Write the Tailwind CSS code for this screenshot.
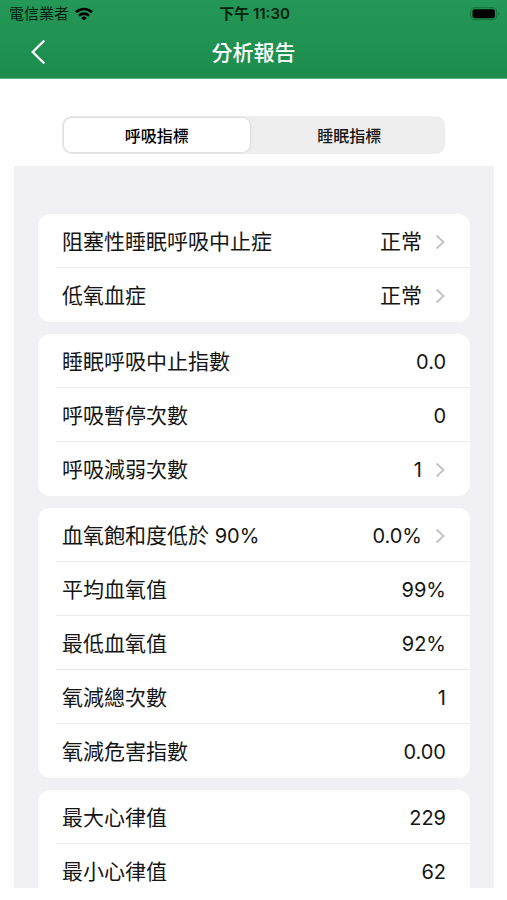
<!DOCTYPE html>
<html lang="zh-Hant">
<head>
<meta charset="utf-8">
<meta name="viewport" content="width=device-width, initial-scale=1">
<title>分析報告</title>
<script src="https://cdn.jsdelivr.net/npm/@tailwindcss/browser@4"></script>
</head>
<body class="flex h-screen flex-col overflow-hidden bg-white pb-3 font-['Inter','Noto_Sans_CJK_TC',sans-serif] text-[#151515]">
  <header class="shrink-0 border-b border-[#5cb27f] bg-linear-to-b from-[#249857] to-[#1c8c4d]">
    <div class="grid h-7 grid-cols-[1fr_auto_1fr] items-center pr-[7px] pl-[9px] text-[15px] text-[#04200f]">
      <div class="flex items-center gap-1.5">
        <span>電信業者</span>
        <svg class="h-[14px] w-[18px]" viewBox="0 0 18 14" fill="none" stroke="#000" stroke-width="2.6" aria-hidden="true">
          <path d="M1 5.2a11.6 11.6 0 0 1 16 0"/>
          <path d="M4 8.6a7.3 7.3 0 0 1 10 0"/>
          <path d="M9 13.6 6.2 10.9a4 4 0 0 1 5.600 0z" fill="#000" stroke="none"/>
        </svg>
      </div>
      <time class="font-semibold">下午 11:30</time>
      <svg class="h-[14px] w-[30px] justify-self-end" viewBox="0 0 30 14" aria-hidden="true">
        <rect x=".7" y=".7" width="26" height="12" rx="4" fill="none" stroke="#147a40" stroke-width="1.300"/>
        <rect x="2.500" y="2.200" width="22.500" height="9" rx="2.200" fill="#000"/>
        <path d="M28 4.700a2.300 2.300 0 0 1 0 4z" fill="#147a40"/>
      </svg>
    </div>
    <div class="grid h-[50px] grid-cols-[1fr_auto_1fr] items-center text-white">
      <button type="button" aria-label="返回" class="ml-[30px] w-4 pb-0.5">
        <svg class="h-[26px] w-4" viewBox="0 0 16 26" fill="none" stroke="currentColor" stroke-width="2.300" aria-hidden="true"><path d="M14.300 1.500 2.700 13l11.600 11.500"/></svg>
      </button>
      <h1 class="text-[21px] leading-6 font-medium">分析報告</h1>
    </div>
  </header>

  <div class="mx-[62px] mt-[37px] mb-3 grid h-[38px] shrink-0 grid-cols-[49fr_51fr] rounded-[9px] bg-[#eeeeee] p-0.5 text-base font-medium" role="tablist">
    <button type="button" role="tab" aria-selected="true" class="rounded-lg bg-white pt-0.5 text-black shadow-[0_0_2px_1px_rgba(0,0,0,0.08)]">呼吸指標</button>
    <button type="button" role="tab" aria-selected="false" class="pt-0.5 pl-1.5">睡眠指標</button>
  </div>

  <main class="mr-[13px] ml-3.5 flex min-h-0 flex-1 flex-col gap-3 overflow-hidden bg-[#f0f0f5] px-6 pt-12 text-[21px] leading-8">
    <ul class="shrink-0 divide-y divide-[#ededed] rounded-xl bg-white pl-[18px]">
      <li class="h-[54px]"><a href="#osa" class="flex h-full items-center pt-0.5 pr-6 pl-1.5"><span>阻塞性睡眠呼吸中止症</span><span class="ml-auto">正常</span><svg class="ml-3 h-4 w-3" viewBox="0 0 12 16" fill="none" stroke="#c4c4c6" stroke-width="2" aria-hidden="true"><path d="M2.500 1.500 9.500 8l-7 6.500"/></svg></a></li>
      <li class="h-[54px]"><a href="#hypoxemia" class="flex h-full items-center pt-0.5 pr-6 pl-1.5"><span>低氧血症</span><span class="ml-auto">正常</span><svg class="ml-3 h-4 w-3" viewBox="0 0 12 16" fill="none" stroke="#c4c4c6" stroke-width="2" aria-hidden="true"><path d="M2.500 1.500 9.500 8l-7 6.500"/></svg></a></li>
    </ul>
    <ul class="shrink-0 divide-y divide-[#ededed] rounded-xl bg-white pl-[18px]">
      <li class="flex h-[54px] items-center justify-between pt-0.5 pr-6 pl-1.5"><span>睡眠呼吸中止指數</span><span class="text-xl">0.0</span></li>
      <li class="flex h-[54px] items-center justify-between pt-0.5 pr-6 pl-1.5"><span>呼吸暫停次數</span><span class="text-xl">0</span></li>
      <li class="h-[54px]"><a href="#hypopnea" class="flex h-full items-center pt-0.5 pr-6 pl-1.5"><span>呼吸減弱次數</span><span class="ml-auto text-xl">1</span><svg class="ml-3 h-4 w-3" viewBox="0 0 12 16" fill="none" stroke="#c4c4c6" stroke-width="2" aria-hidden="true"><path d="M2.500 1.500 9.500 8l-7 6.500"/></svg></a></li>
    </ul>
    <ul class="shrink-0 divide-y divide-[#ededed] rounded-xl bg-white pl-[18px]">
      <li class="h-[54px]"><a href="#spo2" class="flex h-full items-center pt-0.5 pr-6 pl-1.5"><span>血氧飽和度低於<span class="text-xl"> 90%</span></span><span class="ml-auto text-xl">0.0%</span><svg class="ml-3 h-4 w-3" viewBox="0 0 12 16" fill="none" stroke="#c4c4c6" stroke-width="2" aria-hidden="true"><path d="M2.500 1.500 9.500 8l-7 6.500"/></svg></a></li>
      <li class="flex h-[54px] items-center justify-between pt-0.5 pr-6 pl-1.5"><span>平均血氧值</span><span class="text-xl">99%</span></li>
      <li class="flex h-[54px] items-center justify-between pt-0.5 pr-6 pl-1.5"><span>最低血氧值</span><span class="text-xl">92%</span></li>
      <li class="flex h-[54px] items-center justify-between pt-0.5 pr-6 pl-1.5"><span>氧減總次數</span><span class="text-xl">1</span></li>
      <li class="flex h-[54px] items-center justify-between pt-0.5 pr-6 pl-1.5"><span>氧減危害指數</span><span class="text-xl">0.00</span></li>
    </ul>
    <ul class="shrink-0 divide-y divide-[#ededed] rounded-xl bg-white pl-[18px]">
      <li class="flex h-[54px] items-center justify-between pt-0.5 pr-6 pl-1.5"><span>最大心律值</span><span class="text-xl">229</span></li>
      <li class="flex h-[54px] items-center justify-between pt-0.5 pr-6 pl-1.5"><span>最小心律值</span><span class="text-xl">62</span></li>
    </ul>
  </main>
</body>
</html>
